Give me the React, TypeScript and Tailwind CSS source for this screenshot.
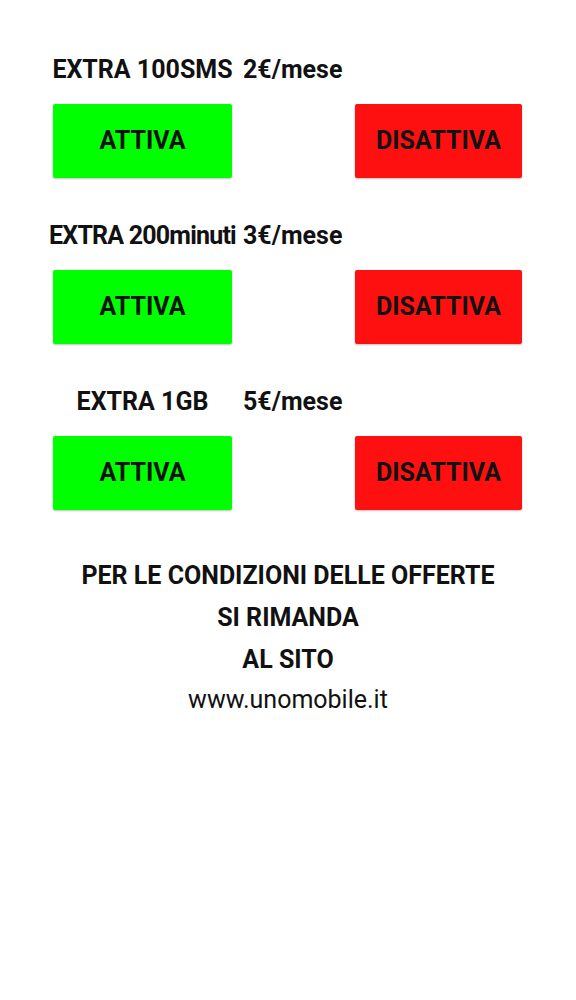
const offers = [
  { label: "EXTRA 100SMS", price: "2€/mese", tight: false },
  { label: "EXTRA 200minuti", price: "3€/mese", tight: true },
  { label: "EXTRA 1GB", price: "5€/mese", tight: false },
]

export default function App() {
  return (
    <div className="min-h-[1000px] w-[576px] bg-white font-['Roboto',sans-serif] text-[#111]">
      <div className="flex flex-col gap-[45px] pl-[53px] pr-[54px] pt-[57px]">
        {offers.map((o) => (
          <div key={o.label} className="flex flex-col gap-[21px]">
            <div className="flex h-[26px] items-center text-[25px] font-bold leading-[26px]">
              <div
                className={
                  o.tight
                    ? "flex w-[179px] justify-center whitespace-nowrap tracking-[-0.8px]"
                    : "flex w-[179px] justify-center whitespace-nowrap"
                }
              >
                {o.label}
              </div>
              <div className="ml-[11px] whitespace-nowrap">{o.price}</div>
            </div>
            <div className="flex justify-between">
              <button className="h-[74px] w-[179px] rounded-[2px] bg-[#00ff00] text-[25px] font-bold text-[#111] shadow-[0_1px_2px_rgba(0,0,0,0.25)]">
                ATTIVA
              </button>
              <button className="h-[74px] w-[167px] rounded-[2px] bg-[#ff1010] text-[25px] font-bold text-[#111] shadow-[0_1px_2px_rgba(0,0,0,0.25)]">
                DISATTIVA
              </button>
            </div>
          </div>
        ))}
      </div>
      <div className="mt-[45px] flex flex-col items-center text-[25px] leading-[42px]">
        <p className="font-bold">PER LE CONDIZIONI DELLE OFFERTE</p>
        <p className="font-bold">SI RIMANDA</p>
        <p className="font-bold">AL SITO</p>
        <p className="leading-[38px]">www.unomobile.it</p>
      </div>
    </div>
  )
}
